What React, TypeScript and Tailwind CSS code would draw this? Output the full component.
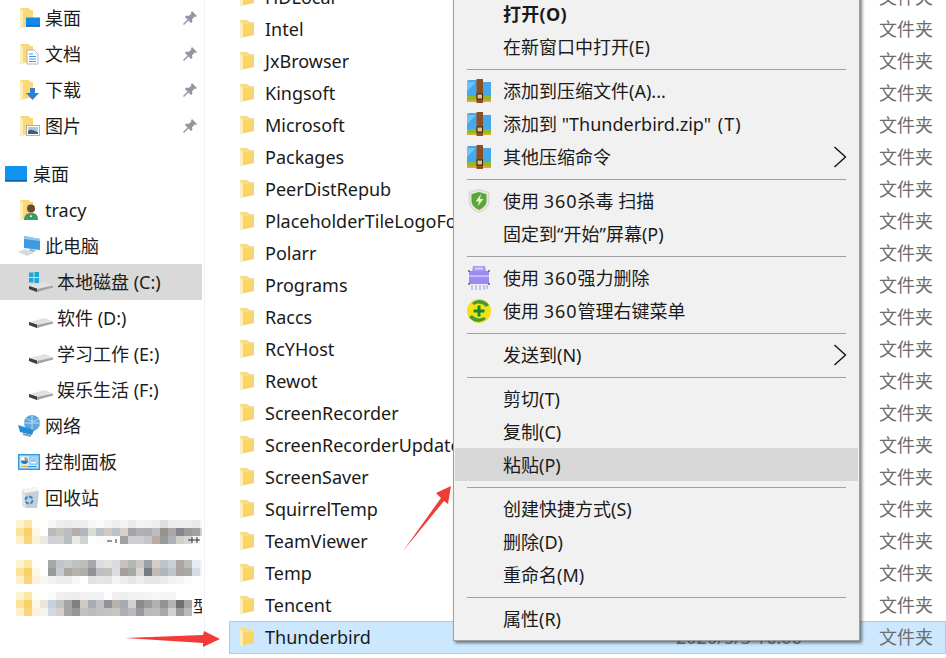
import React from "react";

const font = { fontFamily: '"Noto Sans", "Noto Sans CJK SC", sans-serif' };

function Folder({ className = "" }: { className?: string }) {
  return (
    <svg width="16" height="20" viewBox="0 0 16 20" className={className}>
      <path d="M1 1 H9 L10 3 H15 V16 L1 19 Z" fill="#f6dd8c" />
      <path d="M4 5 H15 V16 L4 18 Z" fill="#fbd467" />
      <path d="M1 2 V19 L4 18 V5 Z" fill="#fdeeb8" />
    </svg>
  );
}

function QuickIcon({ children }: { children: React.ReactNode }) {
  return (
    <svg width="22" height="22" viewBox="0 0 22 22" className="shrink-0">
      <path d="M1 1 H10 L11 3 H14 V18 L1 21 Z" fill="#f8d878" />
      <path d="M1 1 V21 L4 20 V4 Z" fill="#fdeeb8" />
      {children}
    </svg>
  );
}

const MonitorOverlay = (
  <g>
    <rect x="7" y="10.5" width="14" height="9" fill="#0f8ce8" />
    <rect x="7" y="18.5" width="14" height="1.2" fill="#0b5ca8" />
  </g>
);
const DocOverlay = (
  <g>
    <path d="M8 7 H15 L19 11 V21 H8 Z" fill="#fff" stroke="#9aa6b4" strokeWidth="0.8" />
    <path d="M10 11 H14 M10 13.5 H17 M10 16 H17 M10 18.5 H17" stroke="#3d9bd8" strokeWidth="1" />
  </g>
);
const DownOverlay = <path d="M11 9 H16 V14 H20 L13.5 21 L7 14 H11 Z" fill="#2f7fd6" />;
const PicOverlay = (
  <g>
    <rect x="7.5" y="10.5" width="13" height="10" fill="#fff" stroke="#9aa0a8" strokeWidth="0.8" />
    <rect x="9" y="12" width="10" height="4" fill="#a7c9e4" />
    <path d="M9 19 V16 L12 14.5 L19 17 V19 Z" fill="#4c5a68" />
  </g>
);

function Pin() {
  return (
    <svg width="16" height="16" viewBox="0 0 16 16" className="shrink-0">
      <path d="M10 1 L15 6 L13.6 7 L12.6 6.6 L10 9.6 L10.5 12 L9 13 L3 7 L4 5.6 L6.5 6 L9.4 3.4 L9 2.4 Z" fill="#8f98a3" />
      <path d="M6 10 L1.5 14.5" stroke="#8f98a3" strokeWidth="1.4" />
    </svg>
  );
}

function Drive({ win = false }: { win?: boolean }) {
  return (
    <svg width="25" height="22" viewBox="0 0 25 22" className="shrink-0">
      {win && (
        <g fill="#1ba6d6">
          <rect x="1" y="1.5" width="4.5" height="4.5" />
          <rect x="6.5" y="1" width="4.5" height="5" />
          <rect x="1" y="7" width="4.5" height="4.5" />
          <rect x="6.5" y="7" width="4.5" height="5" />
        </g>
      )}
      <path d="M1 15 L17 11 L25 14.5 L9 19 Z" fill="#e2e2e2" />
      <path d="M1 15 L9 18 L25 14.5 V16.5 L9 21 L1 18 Z" fill="#a3a3a3" />
      <path d="M1 15 L9 17.5 V21 L1 18 Z" fill="#3f3f3f" />
    </svg>
  );
}

function DesktopIcon() {
  return (
    <svg width="25" height="18" viewBox="0 0 25 18" className="shrink-0">
      <rect x="1" y="1" width="22" height="15.5" rx="0.5" fill="#1094f0" />
      <rect x="1" y="15" width="22" height="1.5" fill="#0b5aa6" />
    </svg>
  );
}

function PersonIcon() {
  return (
    <QuickIcon>
      <circle cx="12" cy="9.5" r="4" fill="#6a4a35" />
      <path d="M5 21 C5 15 9 14 12 14 C16 14 19 15 19 21 Z" fill="#3d9a62" />
      <path d="M12 15 L13 18 L11 18 Z" fill="#fff" />
    </QuickIcon>
  );
}

function PcIcon() {
  return (
    <svg width="24" height="22" viewBox="0 0 24 22" className="shrink-0">
      <path d="M7 1 L23 4 V15 L7 13 Z" fill="#3d9be0" />
      <path d="M7 1 L23 4 V6 L7 4 Z" fill="#8ccaf2" />
      <path d="M13 14 L19 15 L17 17 L12 16 Z" fill="#9fb0bd" />
      <path d="M1 17 L8 14 L17 18 L10 21 Z" fill="#d5dadf" />
    </svg>
  );
}

function NetworkIcon() {
  return (
    <svg width="24" height="24" viewBox="0 0 24 24" className="shrink-0">
      <circle cx="15" cy="9" r="8" fill="#5ba7de" />
      <path d="M9 4 C13 8 18 8 21 5 M15 1 V17 M7 9 H23" stroke="#bfe0f5" strokeWidth="1" fill="none" />
      <path d="M1 11 L17 16 L15 21 L3 18 Z" fill="#1f8fdc" />
      <path d="M6 20 L14 22" stroke="#8b98a5" strokeWidth="2" />
    </svg>
  );
}

function PanelIcon() {
  return (
    <svg width="24" height="20" viewBox="0 0 24 20" className="shrink-0">
      <rect x="1" y="2" width="22" height="16" fill="#2f9be0" />
      <rect x="2.5" y="3.5" width="19" height="13" fill="#cfe9f8" />
      <circle cx="7.5" cy="8.5" r="3.5" fill="#fff" />
      <path d="M7.5 8.5 V5 A3.5 3.5 0 0 1 11 8.5 Z" fill="#e8912d" />
      <path d="M7.5 8.5 H4 A3.5 3.5 0 0 0 11 8.5 Z" fill="#2277c4" />
      <rect x="13" y="5" width="7" height="7" fill="#fff" stroke="#2f9be0" strokeWidth="0.7" />
      <path d="M14 7 H19 M14 9 H19" stroke="#2f9be0" />
      <rect x="4" y="14" width="7" height="1.2" fill="#e9b13f" />
      <rect x="11" y="14" width="9" height="1.2" fill="#2f9be0" />
    </svg>
  );
}

function BinIcon() {
  return (
    <svg width="22" height="24" viewBox="0 0 22 24" className="shrink-0">
      <path d="M3 3 L18 1 L20 6 L18 22 H7 L3 20 Z" fill="#dfe3e6" />
      <path d="M3 3 L18 1 L20 5 L6 7 Z" fill="#f3f4f5" />
      <path d="M7 22 L6 7 L20 5 L18 22 Z" fill="#c9ced2" />
      <circle cx="10" cy="14" r="3.6" fill="none" stroke="#2b8bd8" strokeWidth="2" strokeDasharray="4 1.5" />
    </svg>
  );
}

function ZipIcon() {
  return (
    <svg width="24" height="24" viewBox="0 0 24 24">
      <path d="M0 3 Q0 1 2 1 H9 L11 3 H24 V17 H0 Z" fill="#45a8ea" />
      <path d="M0 3 H9 L0 12 Z" fill="#70c3f2" />
      <rect x="0" y="17" width="24" height="4" fill="#8fb82e" />
      <rect x="0" y="21" width="24" height="2" fill="#e7a52b" />
      <rect x="9.5" y="0" width="6.5" height="24" fill="#8d4f22" />
      <rect x="10" y="15" width="5.5" height="5" fill="#e9c178" stroke="#3d2410" strokeWidth="1" />
    </svg>
  );
}

function ShieldIcon() {
  return (
    <svg width="22" height="24" viewBox="0 0 22 24">
      <path d="M11 0.5 L21 3.5 V12 C21 18 16 21.5 11 23.5 C6 21.5 1 18 1 12 V3.5 Z" fill="#e6e6dc" stroke="#c4c4b8" strokeWidth="0.6" />
      <path d="M11 3 L18.5 5.2 V12 C18.5 16.5 14.5 19.2 11 21 C7.5 19.2 3.5 16.5 3.5 12 V5.2 Z" fill="#58a53a" />
      <path d="M13 5 L7.5 12.5 H11 L9.5 17.5 L15.5 10 H12 Z" fill="#e6f3c4" />
    </svg>
  );
}

function ShredderIcon() {
  return (
    <svg width="24" height="26" viewBox="0 0 24 26">
      <path d="M6 1 H18 L19 6 H5 Z" fill="#a99bf2" />
      <rect x="8" y="2.5" width="8" height="2" fill="#d8d2fb" />
      <rect x="2" y="6" width="20" height="13" rx="1" fill="#9a8bf0" />
      <rect x="2" y="10" width="20" height="2.2" fill="#c3b9f8" />
      <path d="M5 20 V25 M9 20 V25 M13 20 V25 M17 20 V25 M20 20 V24" stroke="#bdb3f5" strokeWidth="1.6" />
      <path d="M1 6 H3 M21 6 H23 M1 19 H3 M21 19 H23" stroke="#222" strokeWidth="1" />
    </svg>
  );
}

function ManageIcon() {
  return (
    <svg width="24" height="24" viewBox="0 0 24 24">
      <circle cx="12" cy="12" r="12" fill="#f4e11a" />
      <path d="M5 4 A11.5 11.5 0 0 1 22 6 L19 8 A9 9 0 0 0 7 6 Z" fill="#3f9a3a" />
      <path d="M19 20 A11.5 11.5 0 0 1 2 18 L5 16 A9 9 0 0 0 17 18 Z" fill="#3f9a3a" />
      <path d="M12 6.5 V17.5 M6.5 12 H17.5" stroke="#138a2a" strokeWidth="3" />
    </svg>
  );
}

type MosaicRow = { y: number; x: number; c: string[] };
function Mosaic({
  rows,
  folderY,
  marks,
}: {
  rows: MosaicRow[];
  folderY: number;
  marks?: string;
}) {
  return (
    <svg width="186" height="36" viewBox="0 0 186 36" className="shrink-0">
      {[0, 8, 16].map((dy, i) => (
        <g key={dy}>
          <rect x="0" y={folderY + dy} width="8" height="8" fill={["#fff3cf", "#fbe39c", "#fdf0c6"][i]} />
          <rect x="8" y={folderY + dy} width="8" height="8" fill={["#fbe8a8", "#f9d167", "#f9d67c"][i]} />
          <rect x="16" y={folderY + dy} width="8" height="8" fill={["#fffdf6", "#fdf6e2", "#fcf2d8"][i]} />
        </g>
      ))}
      {rows.map((r) =>
        r.c.map((col, i) => (
          <rect key={`${r.y}-${i}`} x={r.x + i * 8} y={r.y} width="8" height="8" fill={col} />
        ))
      )}
      {marks && <path d={marks} stroke="#333" strokeWidth="1" fill="none" />}
    </svg>
  );
}

const mosaicA: MosaicRow[] = [
  { y: 4, x: 32, c: ["#f7f7f6", "#eeeeee", "#ebebeb", "#eeeeee", "#eeeeee", "#f6f6f6", "#fbfbfb", "#f3f3f3", "#eeeeee", "#f3f3f3", "#eaeaea", "#f4f4f4", "#f1f1f1", "#eeeeee", "#dedede", "#ececec", "#eeeeee", "#eeeeee", "#e8e8e8", "#f4f4f4"] },
  { y: 12, x: 32, c: ["#b7babd", "#c5c4bd", "#bcbdc3", "#b8aea8", "#b2b8c0", "#dcdcd6", "#b9c1ca", "#cfcbc5", "#bcc2ca", "#d5d2c9", "#a4a4a6", "#afb1b7", "#aeb0b5", "#bcbdc0", "#98928e", "#aaa8a5", "#85878f", "#9b9b9a", "#a2a3a0", "#d0d0d0"] },
  { y: 20, x: 24, c: ["#e8e8e5", "#cfd0d4", "#d2d3d5", "#bdbec4", "#e8e8e5", "#d2d2d0", "#fdfdfd", "#fbfbfb", "#fafafa", "#fdfdfd", "#a0a0a5", "#cfcfd3", "#cfcfd2", "#c6c6c8", "#b8aca4", "#9a9b9f", "#aeb0bb", "#cfcfcc", "#d6d6d6", "#f4f4f4"] },
];
const mosaicB: MosaicRow[] = [
  { y: 8, x: 32, c: ["#a8a8a8", "#c1c4c8", "#c9c9ca", "#bfc0c2", "#bcbfbb", "#a9a9a9", "#dbdcdf", "#e4e2e0", "#d9dade", "#c9c1c1", "#b4b9b6", "#cbc6c3", "#9aa2a8", "#d4ccc9", "#bcc4cc", "#cbd0d4", "#aca6a2", "#bcbcb8", "#e6eaf3", "#f2f2f2"] },
  { y: 16, x: 32, c: ["#9a9a9c", "#c6c9cd", "#aba7a2", "#b5b1ad", "#adadab", "#8e9296", "#bcc0c4", "#c1c2c0", "#dcdde0", "#a69e9e", "#aaa9a7", "#d6d5d0", "#777b80", "#c2b9b4", "#aeb6bd", "#c0c6c9", "#a9a3a0", "#aba9a3", "#d6dbe8", "#f0f0f0"] },
  { y: 24, x: 24, c: ["#f9f7f2", "#f1f1f1", "#ececec", "#ececec", "#f7f7f7", "#ffffff", "#e2e2e2", "#e6e6e6", "#e4e4e4", "#f4f4f4", "#ededed", "#e5e5e5", "#eeeeee", "#e6e6e6", "#e6e6e6", "#eaeaea", "#f2f2f2", "#f5f5f5", "#fafafa"] },
];
const mosaicC: MosaicRow[] = [
  { y: 4, x: 24, c: ["#ffffff", "#fbfbfb", "#f0f0f0", "#eeeeee", "#ececec", "#f2f2f2", "#f2f2f2", "#f2f2f2", "#fdfdfd", "#f0f0f0", "#eeeeee", "#f1f1f1", "#f2f2f2", "#f4f4f4", "#f7f7f7", "#f5f5f5", "#f5f5f5", "#ffffff"] },
  { y: 12, x: 24, c: ["#eae4df", "#c6d0db", "#c2c3c4", "#a4a4a2", "#7f8085", "#cfcac4", "#a9acb0", "#bec0c4", "#919496", "#b7b3ac", "#a7aab1", "#d0d0d0", "#8b8b8f", "#9d9c9d", "#b3b0ae", "#949498", "#b4b2b1", "#6f7073", "#a4a4a4"] },
  { y: 20, x: 24, c: ["#f5f3ef", "#d2d8df", "#d4cfcf", "#a5a5a7", "#96979a", "#c0c0bc", "#bcbcbb", "#c0c0bf", "#c3c4c1", "#c6c7c2", "#adb0b5", "#b8b9bc", "#9b9b9f", "#bbb9b8", "#bcbcbe", "#a9a9ab", "#d1d1d0", "#9b9b9d", "#b9b9b9"] },
];

function SideRow({
  pad,
  icon,
  label,
  pin,
  selected,
}: {
  pad: string;
  icon: React.ReactNode;
  label: string;
  pin?: boolean;
  selected?: boolean;
}) {
  return (
    <div className={`flex h-9 items-center ${pad} ${selected ? "bg-[#d9d9d9]" : ""}`}>
      {icon}
      <span className="ml-[4px] flex-1 whitespace-nowrap text-[18px] leading-none text-[#1c1c1c]">{label}</span>
      {pin && (
        <span className="mr-[4px]">
          <Pin />
        </span>
      )}
    </div>
  );
}

const folders = [
  "HDLocal",
  "Intel",
  "JxBrowser",
  "Kingsoft",
  "Microsoft",
  "Packages",
  "PeerDistRepub",
  "PlaceholderTileLogoFolder",
  "Polarr",
  "Programs",
  "Raccs",
  "RcYHost",
  "Rewot",
  "ScreenRecorder",
  "ScreenRecorderUpdate",
  "ScreenSaver",
  "SquirrelTemp",
  "TeamViewer",
  "Temp",
  "Tencent",
];

function FileRow({ name, selected, date }: { name: string; selected?: boolean; date?: string }) {
  return (
    <div
      className={`flex items-center pl-[9px] ${
        selected ? "h-[33px] border border-[#99d1ff] bg-[#cce8ff] pb-px" : "h-8 border border-transparent"
      }`}
    >
      <Folder className="shrink-0" />
      <span className="ml-[10px] flex-1 whitespace-nowrap text-[18px] leading-none text-[#1a1a1a]">{name}</span>
      <span className="w-[203px] shrink-0 whitespace-nowrap text-[18px] leading-none text-[#7a7a7a]">{date}</span>
      <span className="w-[66px] shrink-0 whitespace-nowrap text-[18px] leading-none text-[#6d6d6d]">文件夹</span>
    </div>
  );
}

function MenuItem({
  label,
  icon,
  bold,
  arrow,
  hover,
}: {
  label: React.ReactNode;
  icon?: React.ReactNode;
  bold?: boolean;
  arrow?: boolean;
  hover?: boolean;
}) {
  return (
    <div className={`flex h-[33px] items-center ${hover ? "bg-[#d7d7d7]" : ""}`}>
      <span className="flex w-[48px] shrink-0 items-center justify-center">{icon}</span>
      <span className={`flex-1 whitespace-nowrap text-[18px] leading-none text-[#1a1a1a] ${bold ? "font-bold tracking-[0.3px]" : ""}`}>
        {label}
      </span>
      {arrow && (
        <svg width="14" height="22" viewBox="0 0 14 22" className="mr-[11px]">
          <path d="M1.5 1 L12.5 11 L1.5 21" fill="none" stroke="#111" strokeWidth="1.4" />
        </svg>
      )}
    </div>
  );
}

function Sep() {
  return (
    <div className="flex h-[11px] items-start px-3 pt-[6px]">
      <div className="h-px flex-1 bg-[#a0a0a0]" />
    </div>
  );
}

export default function App() {
  return (
    <div className="relative flex h-[658px] w-[946px] overflow-hidden bg-white" style={font}>
      <aside className="w-[205px] shrink-0 border-r border-[#f2f2f2]">
        <div className="w-[202px]">
          <div className="pb-3">
            <SideRow pad="pl-[19px]" icon={<QuickIcon>{MonitorOverlay}</QuickIcon>} label="桌面" pin />
            <SideRow pad="pl-[19px]" icon={<QuickIcon>{DocOverlay}</QuickIcon>} label="文档" pin />
            <SideRow pad="pl-[19px]" icon={<QuickIcon>{DownOverlay}</QuickIcon>} label="下载" pin />
            <SideRow pad="pl-[19px]" icon={<QuickIcon>{PicOverlay}</QuickIcon>} label="图片" pin />
          </div>
          <SideRow pad="pl-[4px]" icon={<DesktopIcon />} label="桌面" />
          <SideRow pad="pl-[19px]" icon={<PersonIcon />} label="tracy" />
          <SideRow pad="pl-[17px]" icon={<PcIcon />} label="此电脑" />
          <SideRow pad="pl-[28px]" icon={<Drive win />} label="本地磁盘 (C:)" selected />
          <SideRow pad="pl-[28px]" icon={<Drive />} label="软件 (D:)" />
          <SideRow pad="pl-[28px]" icon={<Drive />} label="学习工作 (E:)" />
          <SideRow pad="pl-[28px]" icon={<Drive />} label="娱乐生活 (F:)" />
          <SideRow pad="pl-[17px]" icon={<NetworkIcon />} label="网络" />
          <SideRow pad="pl-[17px]" icon={<PanelIcon />} label="控制面板" />
          <SideRow pad="pl-[19px]" icon={<BinIcon />} label="回收站" />
          <div className="flex h-9 items-center pl-[16px]">
            <Mosaic rows={mosaicA} folderY={4} marks="M91 25 L96 25 M100 23 L100 27 M172 24 H184 M176 21 V27 M181 21 V27" />
          </div>
          <div className="flex h-9 items-center pl-[16px]">
            <Mosaic rows={mosaicB} folderY={8} />
          </div>
          <div className="relative flex h-9 items-center pl-[16px]">
            <Mosaic rows={mosaicC} folderY={4} />
            <span className="absolute left-[193px] top-[9px] w-[9px] overflow-hidden whitespace-nowrap text-[16px] leading-[18px] text-[#222]">型</span>
          </div>
        </div>
      </aside>

      <main className="mt-[-19px] ml-[24px] flex-1">
        {folders.map((f) => (
          <FileRow key={f} name={f} />
        ))}
        <FileRow name="Thunderbird" date="2020/5/3 16:06" selected />
      </main>

      <div className="absolute left-[453px] top-[-9px] w-[407px] border border-[#a0a0a0] bg-[#f1f1f1] px-px py-[5px] shadow-[2px_2px_3px_rgba(0,0,0,0.5)]">
        <MenuItem label="打开(O)" bold />
        <MenuItem label="在新窗口中打开(E)" />
        <Sep />
        <MenuItem label="添加到压缩文件(A)..." icon={<ZipIcon />} />
        <MenuItem
          label={
            <>
              添加到 "Thunderbird.zip" <span className="ml-[2px] tracking-[1px]">(T)</span>
            </>
          }
          icon={<ZipIcon />}
        />
        <MenuItem label="其他压缩命令" icon={<ZipIcon />} arrow />
        <Sep />
        <MenuItem
          label={
            <>
              使用 <span className="tracking-[1px]">360</span>杀毒 扫描
            </>
          }
          icon={<ShieldIcon />}
        />
        <MenuItem label="固定到“开始”屏幕(P)" />
        <Sep />
        <MenuItem
          label={
            <>
              使用 <span className="tracking-[1px]">360</span>强力删除
            </>
          }
          icon={<ShredderIcon />}
        />
        <MenuItem
          label={
            <>
              使用 <span className="tracking-[1px]">360</span>管理右键菜单
            </>
          }
          icon={<ManageIcon />}
        />
        <Sep />
        <MenuItem label="发送到(N)" arrow />
        <Sep />
        <MenuItem label="剪切(T)" />
        <MenuItem label="复制(C)" />
        <MenuItem label="粘贴(P)" hover />
        <Sep />
        <MenuItem label="创建快捷方式(S)" />
        <MenuItem label="删除(D)" />
        <MenuItem label="重命名(M)" />
        <Sep />
        <MenuItem label="属性(R)" />
      </div>

      <svg width="60" height="72" viewBox="0 0 60 72" className="absolute left-[400px] top-[483px]">
        <path d="M3 68 L41 15 L36 10 L51 3 L48 21 L44 18 Z" fill="#f23a36" />
      </svg>
      <svg width="100" height="20" viewBox="0 0 100 20" className="absolute left-[123px] top-[629px]">
        <path d="M2 9 L80 6 L81 2 L97 10 L80 18 L80 14 Z" fill="#f23a36" />
      </svg>
    </div>
  );
}
